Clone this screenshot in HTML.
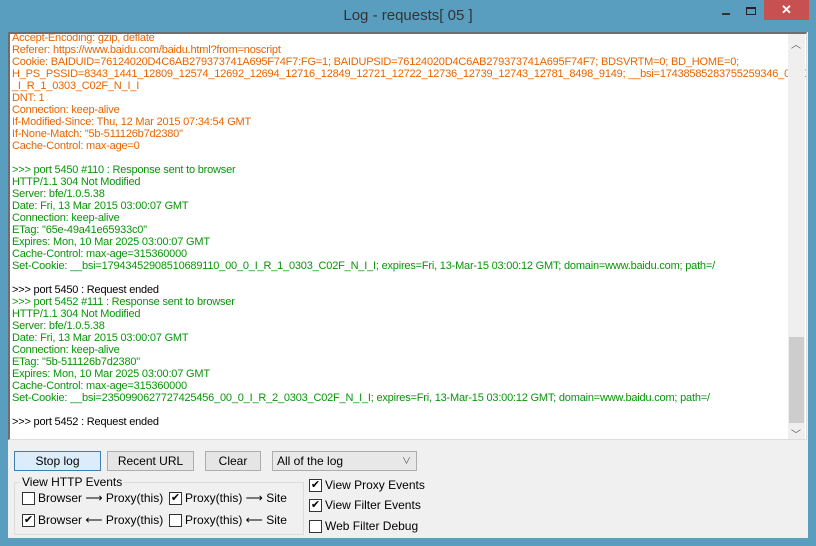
<!DOCTYPE html>
<html><head><meta charset="utf-8"><style>
*{margin:0;padding:0;box-sizing:border-box}
body{width:816px;height:546px;background:#5a9ebf;position:relative;overflow:hidden;font-family:"Liberation Sans","Noto Sans CJK JP",sans-serif}
.title{position:absolute;left:0;top:0;width:816px;height:32px;text-align:center;font-size:15px;color:#333;line-height:32px}
.close{position:absolute;left:764px;top:0;width:45px;height:20px;background:#c75050;color:#fff;text-align:center;font-size:13px;line-height:20px;font-weight:bold}
.max{position:absolute;left:746px;top:7px;width:10px;height:8px;border:1px solid #222;border-top-width:2px}
.min{position:absolute;left:722px;top:13px;width:8px;height:2px;background:#333}
.client{position:absolute;left:8px;top:32px;width:800px;height:506px;background:#f0f0f0}
.log{position:absolute;left:8px;top:32px;width:799px;height:408px;background:#fff;border-top:2px solid #6e6e6e;border-left:2px solid #6e6e6e;border-right:1px solid #ddd;border-bottom:1px solid #ddd;overflow:hidden}
.txt{position:absolute;left:2px;top:-2px;font-size:11px;line-height:12px;letter-spacing:-0.2px;white-space:pre}
.o{color:#e86400}.g{color:#089508}.k{color:#000}
.sb{position:absolute;left:778px;top:0;width:17px;height:406px;background:#efefef}
.thumb{position:absolute;left:1px;top:303px;width:15px;height:86px;background:#cdcdcd}
.arr{position:absolute;left:3px;font-size:10px;color:#606060}
.btn{position:absolute;top:451px;height:20px;border:1px solid #adadad;background:#e5e5e5;font-size:12px;text-align:center;line-height:18px;color:#000}
.cb{position:absolute;width:13px;height:13px;border:1px solid #333;background:#fff;font-size:11px;line-height:11px;text-align:center}
.lbl{position:absolute;font-size:12px;color:#000;white-space:nowrap}
</style></head><body>
<div class="title">Log - requests[ 05 ]</div>
<div class="min"></div><div class="max"></div>
<div class="close">✕</div>
<div class="client"></div>
<div class="log">
<div class="txt"><span class="o">Accept-Encoding: gzip, deflate
Referer: https://www.baidu.com/baidu.html?from=noscript
Cookie: BAIDUID=76124020D4C6AB279373741A695F74F7:FG=1; BAIDUPSID=76124020D4C6AB279373741A695F74F7; BDSVRTM=0; BD_HOME=0;
H_PS_PSSID=8343_1441_12809_12574_12692_12694_12716_12849_12721_12722_12736_12739_12743_12781_8498_9149; __bsi=17438585283755259346_00_0
_I_R_1_0303_C02F_N_I_I
DNT: 1
Connection: keep-alive
If-Modified-Since: Thu, 12 Mar 2015 07:34:54 GMT
If-None-Match: "5b-511126b7d2380"
Cache-Control: max-age=0</span>

<span class="g">&gt;&gt;&gt; port 5450 #110 : Response sent to browser
HTTP/1.1 304 Not Modified
Server: bfe/1.0.5.38
Date: Fri, 13 Mar 2015 03:00:07 GMT
Connection: keep-alive
ETag: "65e-49a41e65933c0"
Expires: Mon, 10 Mar 2025 03:00:07 GMT
Cache-Control: max-age=315360000
Set-Cookie: __bsi=17943452908510689110_00_0_I_R_1_0303_C02F_N_I_I; expires=Fri, 13-Mar-15 03:00:12 GMT; domain=www.baidu.com; path=/</span>

<span class="k">&gt;&gt;&gt; port 5450 : Request ended</span>
<span class="g">&gt;&gt;&gt; port 5452 #111 : Response sent to browser
HTTP/1.1 304 Not Modified
Server: bfe/1.0.5.38
Date: Fri, 13 Mar 2015 03:00:07 GMT
Connection: keep-alive
ETag: "5b-511126b7d2380"
Expires: Mon, 10 Mar 2025 03:00:07 GMT
Cache-Control: max-age=315360000
Set-Cookie: __bsi=2350990627727425456_00_0_I_R_2_0303_C02F_N_I_I; expires=Fri, 13-Mar-15 03:00:12 GMT; domain=www.baidu.com; path=/</span>

<span class="k">&gt;&gt;&gt; port 5452 : Request ended</span></div>
<div class="sb"><div class="arr" style="top:2px">︿</div><div class="thumb"></div><div class="arr" style="top:392px">﹀</div></div>
</div>
<div class="btn" style="left:14px;width:87px;background:#dcecfc;border-color:#3c7fb1">Stop log</div>
<div class="btn" style="left:107px;width:87px">Recent URL</div>
<div class="btn" style="left:205px;width:56px">Clear</div>
<div class="btn" style="left:272px;width:145px;background:#e8e8e8;text-align:left;padding-left:4px">All of the log<span style="position:absolute;right:5px;font-size:9px;color:#555">∨</span></div>
<div style="position:absolute;left:14px;top:482px;width:290px;height:53px;border:1px solid #dcdcdc"></div>
<div class="lbl" style="left:20px;top:475px;background:#f0f0f0;padding:0 2px">View HTTP Events</div>
<div class="cb" style="left:22px;top:492px"></div><div class="lbl" style="left:38px;top:491px">Browser ⟶ Proxy(this)</div>
<div class="cb" style="left:169px;top:492px">✔</div><div class="lbl" style="left:185px;top:491px">Proxy(this) ⟶ Site</div>
<div class="cb" style="left:22px;top:514px">✔</div><div class="lbl" style="left:38px;top:513px">Browser ⟵ Proxy(this)</div>
<div class="cb" style="left:169px;top:514px"></div><div class="lbl" style="left:185px;top:513px">Proxy(this) ⟵ Site</div>
<div class="cb" style="left:309px;top:479px">✔</div><div class="lbl" style="left:325px;top:478px">View Proxy Events</div>
<div class="cb" style="left:309px;top:499px">✔</div><div class="lbl" style="left:325px;top:498px">View Filter Events</div>
<div class="cb" style="left:309px;top:520px"></div><div class="lbl" style="left:325px;top:519px">Web Filter Debug</div>
</body></html>
